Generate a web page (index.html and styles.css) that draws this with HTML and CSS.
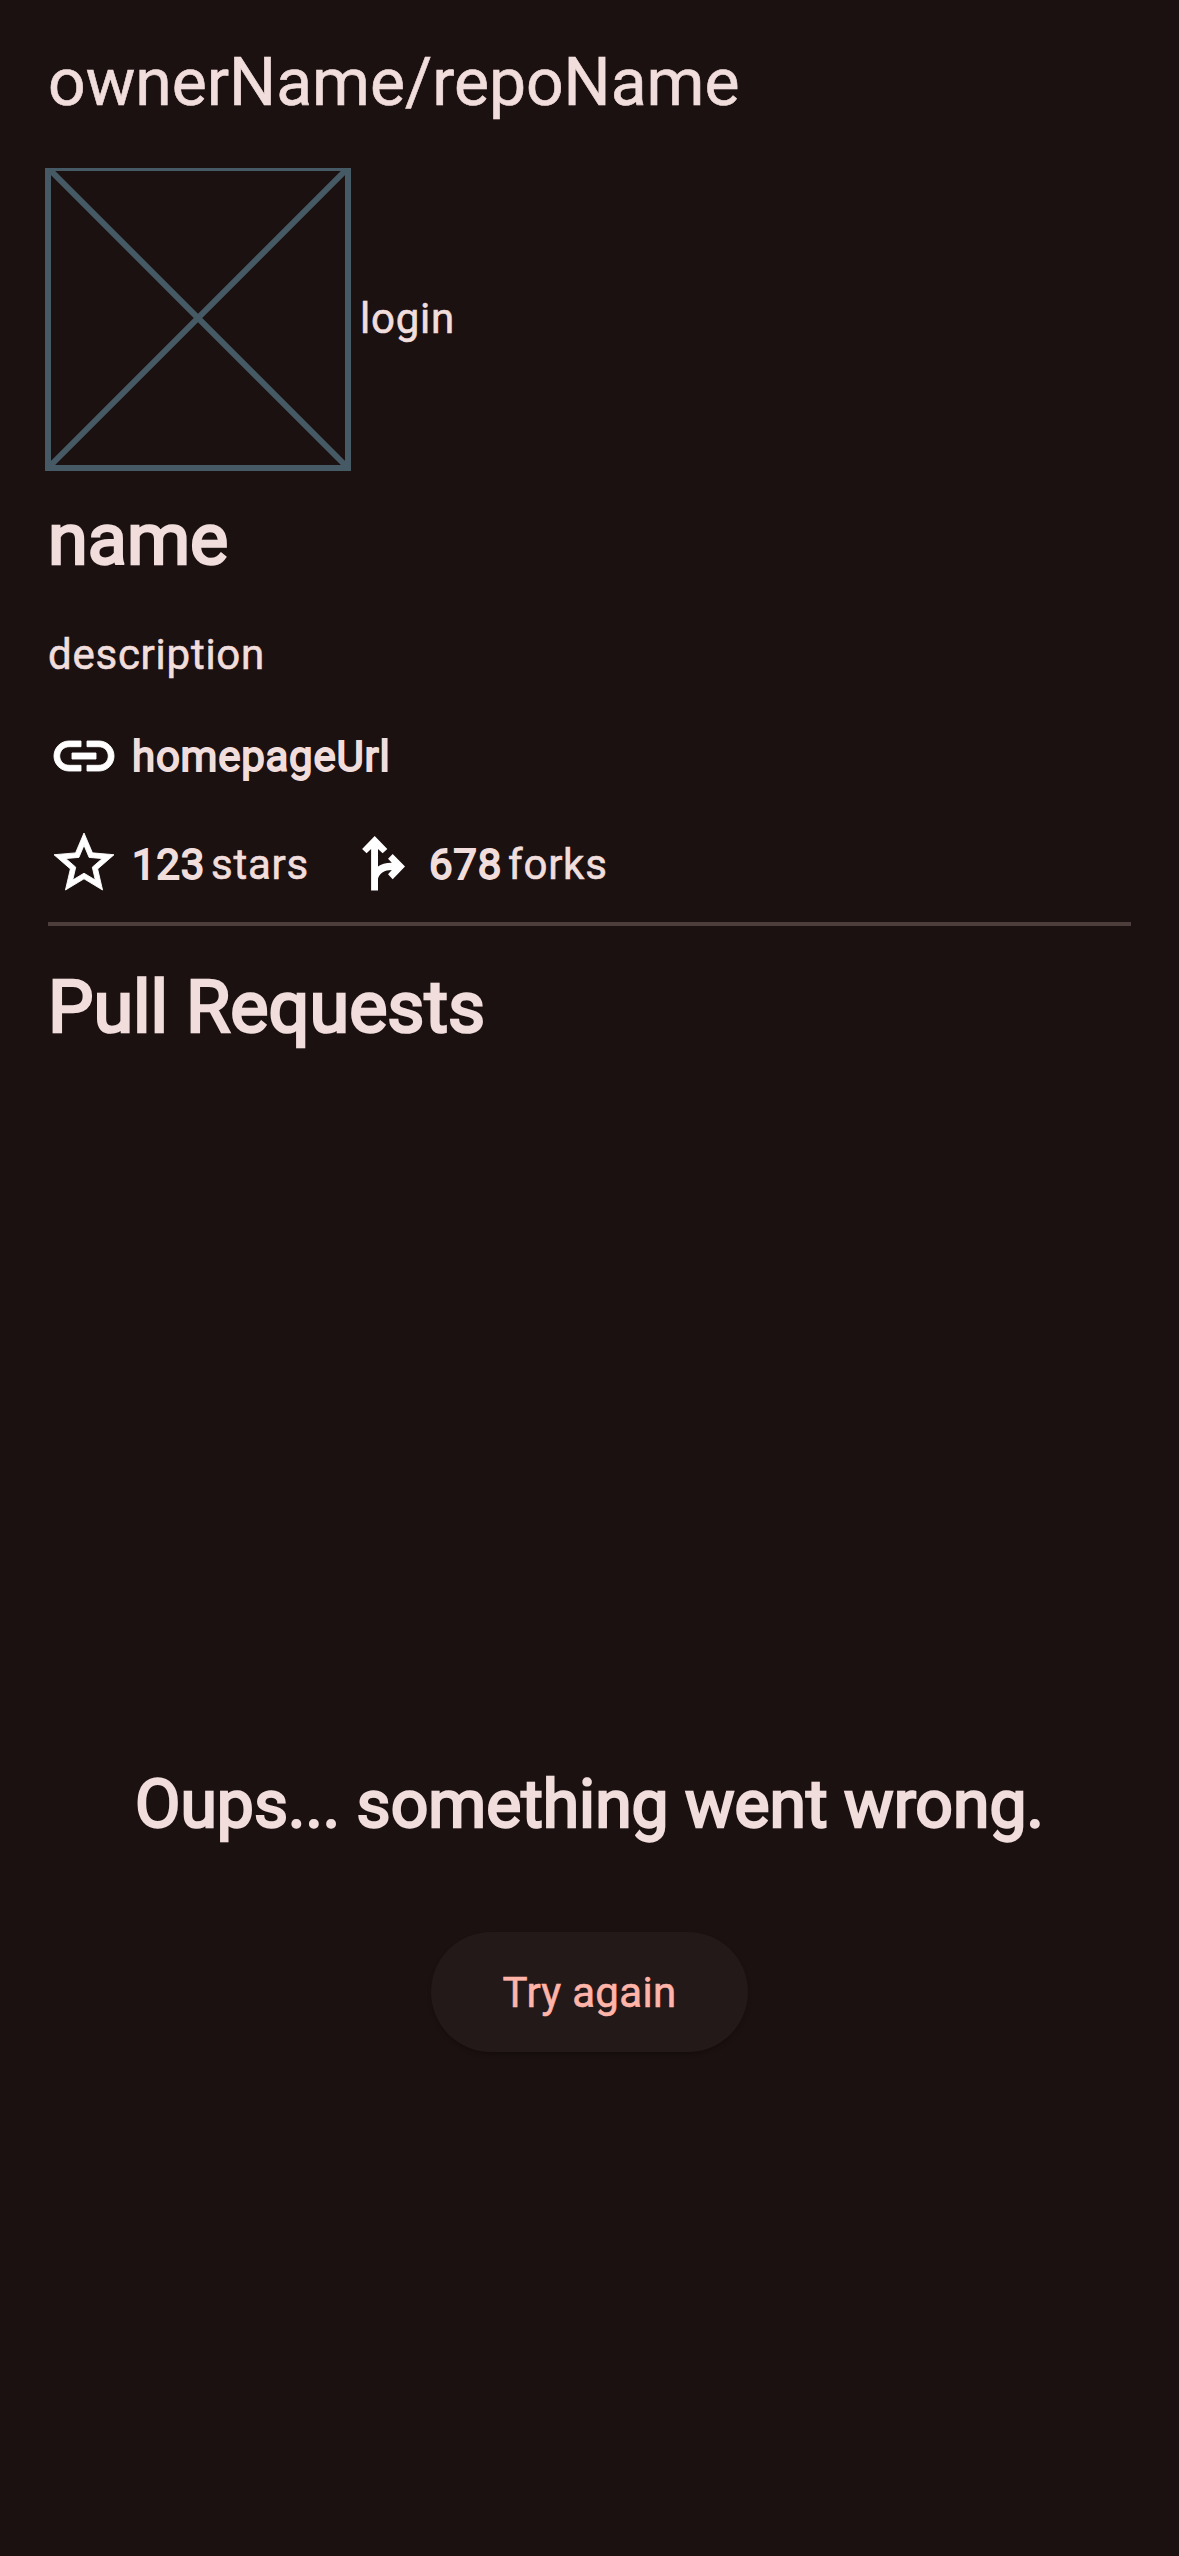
FILE: index.html
```html
<!DOCTYPE html>
<html lang="en">
<head>
<meta charset="utf-8">
<title>ownerName/repoName</title>
<link rel="stylesheet" href="styles.css">
</head>
<body>
<header class="app-bar">ownerName/repoName</header>
<main class="page">
  <div class="owner">
    <svg class="avatar" viewBox="0 0 306 303" fill="none" stroke="#455a64" stroke-width="6">
      <path d="M3 0V300H303V0ZM3 0L303 300M303 0L3 300"/>
    </svg>
    <span class="login">login</span>
  </div>
  <h1 class="heading">name</h1>
  <p class="description">description</p>
  <div class="row homepage">
    <svg class="icon outlined" viewBox="0 0 24 24"><path d="M3.9 12c0-1.71 1.39-3.1 3.1-3.1h4V7H7c-2.76 0-5 2.24-5 5s2.24 5 5 5h4v-1.9H7c-1.71 0-3.1-1.39-3.1-3.1zM8 13h8v-2H8v2zm9-6h-4v1.9h4c1.71 0 3.1 1.39 3.1 3.1s-1.39 3.1-3.1 3.1h-4V17h4c2.76 0 5-2.24 5-5s-2.24-5-5-5z"/></svg>
    <span class="strong">homepageUrl</span>
  </div>
  <div class="row stats">
    <svg class="icon outlined" viewBox="0 0 24 24"><path d="M22 9.24l-7.190-.62L12 2 9.190 8.630 2 9.240l5.460 4.730L5.820 21 12 17.270 18.180 21l-1.630-7.030L22 9.240zM12 15.400l-3.760 2.270 1-4.280-3.320-2.880 4.380-.38L12 6.100l1.710 4.040 4.380.38-3.320 2.880 1 4.280L12 15.400z"/></svg>
    <span class="strong">123</span><span class="unit">stars</span>
    <svg class="icon fork" viewBox="0 0 24 24"><path d="M9.900 3L5.700 7.300L7.200 8.750L8.700 7.300V21.200H11V17.200C11.500 15.300 13.200 14.300 15.600 14.300L14.350 15.750L15.900 17.400L20 13.200L15.900 9L14.350 10.600L15.600 11.900C13.500 11.900 12 12.400 11 13.200V7.300L12.550 8.750L14.100 7.300Z"/></svg>
    <span class="strong">678</span><span class="unit">forks</span>
  </div>
  <hr class="divider">
  <h2 class="heading requests">Pull Requests</h2>
  <section class="error">
    <p class="error-text">Oups... something went wrong.</p>
    <button class="retry" type="button">Try again</button>
  </section>
</main>
</body>
</html>
```

FILE: styles.css
```css
* {
  box-sizing: border-box;
}

body {
  margin: 0;
  min-height: 2556px;
  background: #1b1110;
  color: #f1dedc;
  font: 400 42px/60px Roboto, sans-serif;
  letter-spacing: 0.75px;
  -webkit-text-stroke: 0.6px currentColor;
}

.app-bar {
  height: 168px;
  padding: 0 48px;
  font-size: 66px;
  line-height: 165px;
  letter-spacing: 0;
}

.page {
  display: flex;
  flex-direction: column;
  padding: 0 48px;
}

.owner {
  display: flex;
  align-items: center;
  gap: 9px;
  height: 300px;
}

.avatar {
  width: 306px;
  height: 303px;
  margin: 3px 0 0 -3px;
}

.login,
.strong,
.unit {
  padding-top: 2px;
}

.heading {
  margin: 24px 0 0;
  font-size: 72px;
  font-weight: 400;
  line-height: 96px;
  letter-spacing: 0;
  -webkit-text-stroke: 2.6px currentColor;
}

.description {
  margin: 37px 0 35px;
}

.row {
  display: flex;
  align-items: center;
  height: 72px;
}

.icon {
  width: 72px;
  height: 72px;
  margin-right: 12px;
  fill: #fff;
}

.outlined {
  stroke: #fff;
  stroke-width: 0.3px;
}

.strong {
  -webkit-text-stroke: 1.8px currentColor;
}

.stats {
  margin-top: 35px;
}

.stats .strong,
.stats .unit {
  padding-top: 4px;
}

.unit {
  margin-left: 6px;
}

.fork {
  margin-left: 36px;
}

.divider {
  width: 100%;
  height: 4px;
  margin: 23px 0 0;
  border: 0;
  background: #4d3d3b;
}

.requests {
  margin-top: 34px;
}

.error {
  display: flex;
  flex-direction: column;
  align-items: center;
  margin-top: 707px;
}

.error-text {
  margin: 0;
  font-size: 66px;
  line-height: 84px;
  letter-spacing: 0;
  -webkit-text-stroke: 2.4px currentColor;
}

.retry {
  height: 120px;
  margin-top: 85px;
  padding: 1px 72px 0;
  border: 0;
  border-radius: 60px;
  background: #231918;
  box-shadow: 0 3px 4px rgba(0, 0, 0, 0.2);
  color: #ffb4a9;
  font: 400 42px/60px Roboto, sans-serif;
  letter-spacing: 0.3px;
  -webkit-text-stroke: 0.6px currentColor;
}
```
